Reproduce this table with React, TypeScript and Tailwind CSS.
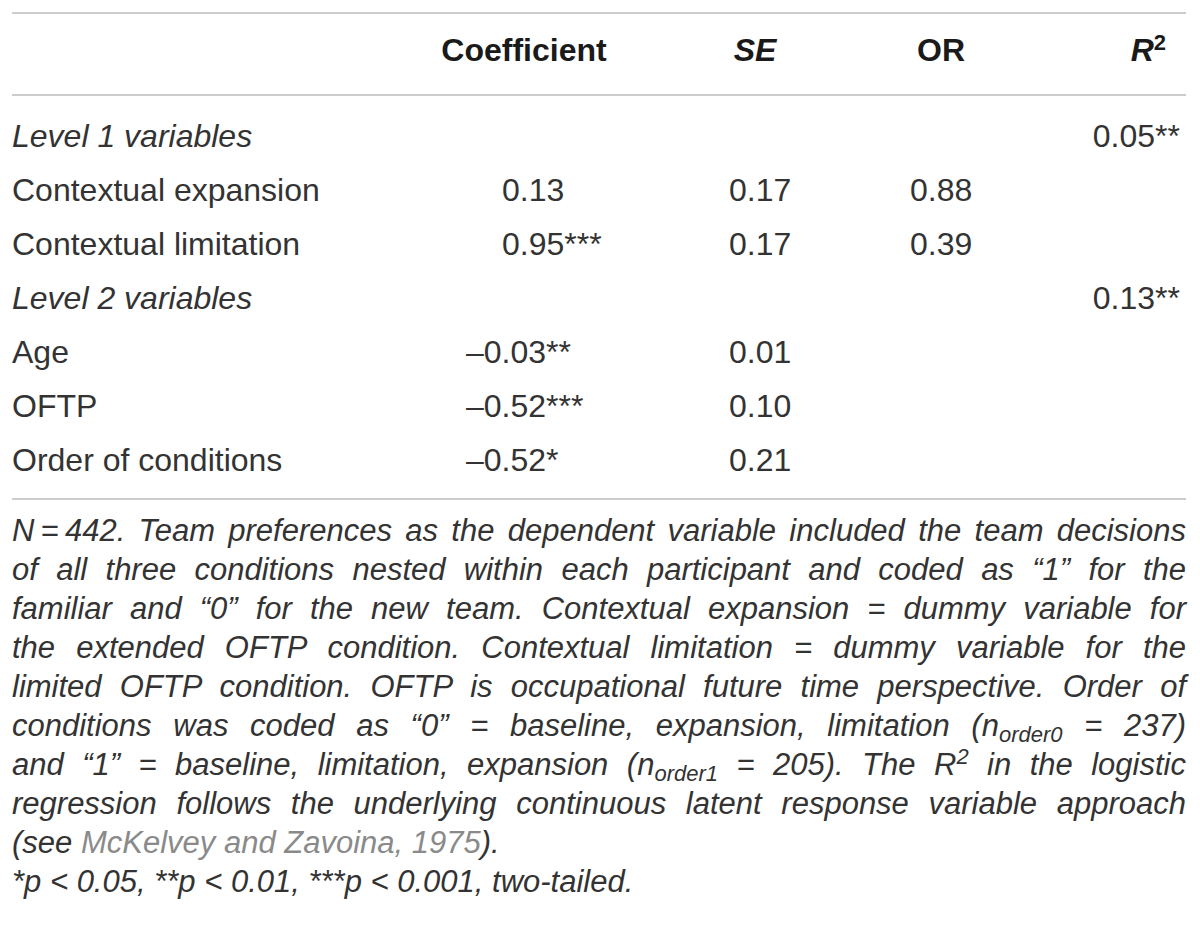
const rows = [
  { label: 'Level 1 variables', italic: true, r2: '0.05**' },
  { label: 'Contextual expansion', coef: '0.13', se: '0.17', or: '0.88' },
  { label: 'Contextual limitation', coef: '0.95***', se: '0.17', or: '0.39' },
  { label: 'Level 2 variables', italic: true, r2: '0.13**' },
  { label: 'Age', coef: '–0.03**', se: '0.01' },
  { label: 'OFTP', coef: '–0.52***', se: '0.10' },
  { label: 'Order of conditions', coef: '–0.52*', se: '0.21' },
];

const grid = 'grid grid-cols-[416px_192px_270px_102px_194px]';

function Rule() {
  return <div className="h-[2px] w-full bg-[#cccccc]" />;
}

function Line({ children, last }: { children: React.ReactNode; last?: boolean }) {
  return (
    <div className={last ? 'whitespace-nowrap' : 'whitespace-nowrap text-justify [text-align-last:justify]'}>
      {children}
    </div>
  );
}

export default function App() {
  return (
    <div className="min-h-[944px] w-[1200px] bg-white font-['Liberation_Sans',Arial,sans-serif] text-[#333]">
      <div className="w-[1174px] pl-[12px] pt-[12px] box-content">
        <Rule />
        <div className={`${grid} pt-[9px] pb-[17px] text-[32px] leading-[54px] font-bold text-[#1a1a1a]`}>
          <div />
          <div className="text-center">Coefficient</div>
          <div className="text-center italic">SE</div>
          <div className="text-center">OR</div>
          <div className="pr-[20px] text-right">
            <span className="italic">R</span>
            <sup className="text-[22px]">2</sup>
          </div>
        </div>
        <Rule />
        <div className="pt-[13px] pb-[11px] text-[32px] leading-[54px]">
          {rows.map((r) => (
            <div key={r.label} className={grid}>
              <div className={r.italic ? 'italic' : ''}>{r.label}</div>
              <div className={r.coef?.startsWith('–') ? 'pl-[38px]' : 'pl-[74px]'}>{r.coef}</div>
              <div className="pl-[109px]">{r.se}</div>
              <div className="pl-[20px]">{r.or}</div>
              <div className="pr-[6px] text-right">{r.r2}</div>
            </div>
          ))}
        </div>
        <Rule />
        <div className="pt-[11px] text-[31px] leading-[39px] italic text-[#333]">
          <Line>N{'\u2009'}={'\u2009'}442. Team preferences as the dependent variable included the team decisions</Line>
          <Line>of all three conditions nested within each participant and coded as “1” for the</Line>
          <Line>familiar and “0” for the new team. Contextual expansion = dummy variable for</Line>
          <Line>the extended OFTP condition. Contextual limitation = dummy variable for the</Line>
          <Line>limited OFTP condition. OFTP is occupational future time perspective. Order of</Line>
          <Line>
            conditions was coded as “0” = baseline, expansion, limitation (n
            <sub className="text-[22px]">order0</sub> = 237)
          </Line>
          <Line>
            and “1” = baseline, limitation, expansion (n<sub className="text-[22px]">order1</sub> = 205). The R
            <sup className="text-[22px]">2</sup> in the logistic
          </Line>
          <Line>regression follows the underlying continuous latent response variable approach</Line>
          <Line last>
            (see <span className="text-[#8a8a8a]">McKelvey and Zavoina, 1975</span>).
          </Line>
          <Line last>*p &lt; 0.05, **p &lt; 0.01, ***p &lt; 0.001, two-tailed.</Line>
        </div>
      </div>
    </div>
  );
}
